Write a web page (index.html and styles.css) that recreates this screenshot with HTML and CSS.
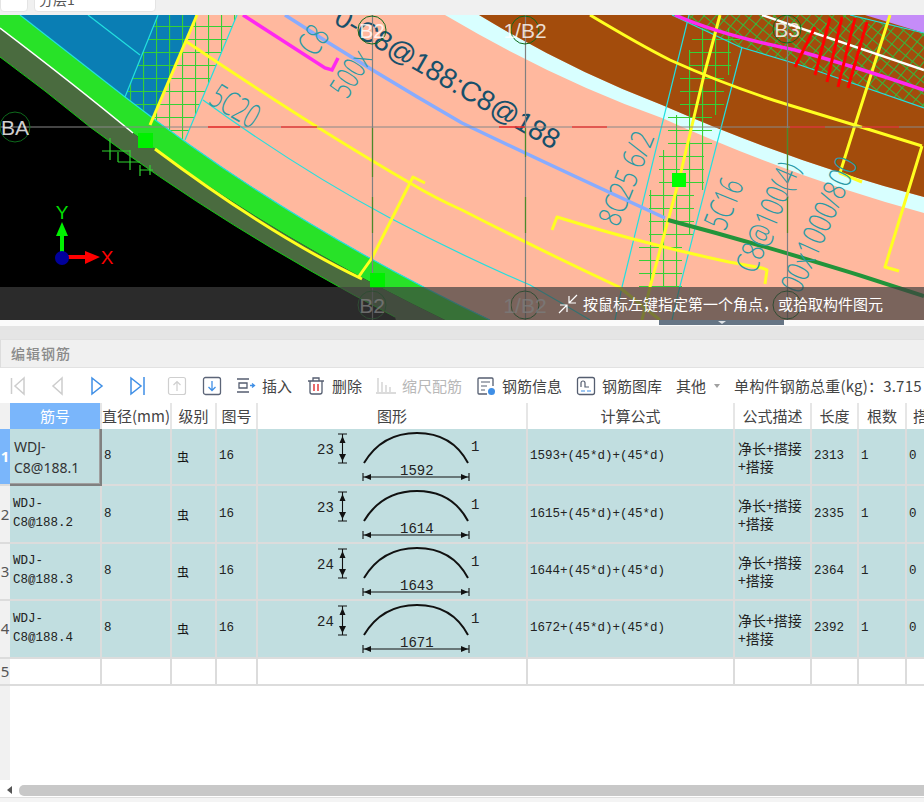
FILE: index.html
```html
<!DOCTYPE html>
<html lang="zh">
<head>
<meta charset="utf-8">
<title>编辑钢筋</title>
<link rel="stylesheet" href="styles.css">
</head>
<body>
<div class="app">
  <div class="topbar">
    <div class="drop drop-a"></div>
    <div class="drop drop-b">分层1</div>
  </div>

  <div class="canvas">
    <svg class="cad" width="924" height="305" viewBox="0 15 924 305">
      <defs>
        <pattern id="grid" width="13" height="13" patternUnits="userSpaceOnUse">
          <path d="M0 .5H13M.5 0V13" stroke="#35d035" stroke-width="1.2" fill="none"/>
        </pattern>
        <pattern id="cross" width="9" height="9" patternUnits="userSpaceOnUse" patternTransform="rotate(40)">
          <path d="M0 .5H9M.5 0V9" stroke="#35b83c" stroke-width="1" fill="none"/>
        </pattern>
      </defs>
      <rect x="0" y="15" width="924" height="305" fill="#000"/>
      <path fill="#4a6b3f" d="M0 28Q75 85 133 133Q270 235 445 320L480 335H400L395 317Q225 228 90 127Q45 90 0 57Z"/>
      <path fill="none" stroke="#12c812" d="M0 57Q45 90 90 127Q225 228 395 317"/>
      <path fill="#ffb89e" d="M197 15H924V320H490Q290 225 125 97L150 125Z"/>
      <polygon fill="#0a7eb4" points="20,15 197,15 150,125 125,97"/>
      <polygon fill="#ffb89e" points="237,15 240,15 185,140 175,136"/>
      <polygon fill="url(#grid)" points="158,15 237,15 185,140 150,125 125,97"/>
      <path fill="#28e228" d="M0 15H20L125 97Q290 225 490 320H445Q270 235 133 133Q75 85 0 28Z"/>
      <path fill="#d8ffff" d="M479 15Q570 70 662 105Q800 165 924 197V213Q800 180 662 118Q555 80 445 15Z"/>
      <path fill="#a34c0c" d="M479 15H924V197Q800 165 662 105Q570 70 479 15Z"/>
      <polygon fill="#c58cf8" points="865,15 924,15 924,33"/>
      <polygon fill="url(#cross)" points="672,15 740,47 800,65 924,108 924,33 850,15"/>
      <path fill="url(#grid)" d="M692 28H740V50H731V75H724V115H712V150H704V190H694V235H682V287H639V235H649V190H659V150H668V115H680V75H689V50H692Z"/>
      <g fill="none" stroke="#22e0e0" stroke-width="1.2">
        <polyline points="237,15 185,140"/>
        <polyline points="158,15 125,97"/>
        <polyline points="88,15 140,55"/>
        <path d="M203 100Q300 170 390 218Q460 255 530 285Q560 302 590 320"/>
        <path d="M125 97Q290 225 490 320"/>
        <polyline points="20,15 125,97"/>
        <polyline points="689,15 622,287 615,320"/>
        <polyline points="742,47 679,290 672,320"/>
        <polyline points="672,15 740,47 800,65 924,108"/>
        <polyline points="850,15 924,33"/>
      </g>
      <g fill="none" stroke="#ffff20" stroke-width="3" stroke-linejoin="round">
        <polyline points="197,15 150,125"/>
        <path d="M187 42Q310 125 410 183Q435 198 462 210Q540 250 619 287L660 320"/>
        <polyline points="425,183 413,177 372,258 362,272 358,278"/>
        <path d="M552 230 557 217Q640 243 729 262L762 268 767 270 765 284"/>
        <path d="M590 15Q640 45 670 60Q730 87 789 105Q855 125 922 146"/>
        <polyline points="720,15 704,75 679,180 650,287 642,320"/>
        <polyline points="890,15 855,125 840,173 862,182"/>
        <polyline points="922,146 885,267 899,271"/>
        <path d="M155 149Q270 235 362 279"/>
      </g>
      <path fill="none" stroke="#fff" stroke-width="1.5" d="M0 28Q75 85 133 133"/>
      <path fill="none" stroke="#fff" stroke-width="2.5" d="M762 15Q840 42 924 70"/>
      <polyline fill="none" stroke="#ff28f0" stroke-width="3.5" points="243,15 325,68 332,70 338,58"/>
      <path fill="none" stroke="#ff28f0" stroke-width="3.5" d="M675 15Q720 35 795 50Q860 68 924 90"/>
      <path fill="none" stroke="#88acff" stroke-width="3.5" d="M285 15Q370 70 462 123Q560 170 665 218"/>
      <path fill="none" stroke="#22943a" stroke-width="4" d="M668 220Q800 255 924 296"/>
      <g stroke="#ff0000" stroke-width="3">
        <line x1="815" y1="27" x2="795" y2="67"/>
        <line x1="830" y1="18" x2="815" y2="75"/>
        <line x1="842" y1="17" x2="827" y2="82"/>
        <line x1="855" y1="18" x2="838" y2="87"/>
        <line x1="867" y1="22" x2="848" y2="88"/>
      </g>
      <g fill="none" stroke="#2fd42f" stroke-width="1.2">
        <path d="M102 151H130M110 138V160M118 152V162M118 162H140M130 150V170M140 165V176M140 170H153M150 165V175"/>
      </g>
      <g class="cad-note">
        <text transform="translate(207,103) rotate(31) scale(1.05,1.6)">5C20</text>
        <text transform="translate(315,58) rotate(-55) scale(1.1,1.6)">C8</text>
        <text transform="translate(347,100) rotate(-58) scale(1.05,1.5)">500x</text>
        <text transform="translate(618,228) rotate(-68) scale(1.15,1.5)">8C25  6/2</text>
        <text transform="translate(725,232) rotate(-68) scale(1.05,1.6)">5C16</text>
        <text transform="translate(755,275) rotate(-67) scale(1.13,1.5)">C8@100(4)</text>
        <text transform="translate(800,295) rotate(-66) scale(1.15,1.5)">00x1000/800</text>
      </g>
      <text class="cad-title" transform="translate(553,150) rotate(30)">0-C8@188:C8@188</text>
      <line x1="0" y1="127" x2="924" y2="127" stroke="#888" stroke-width="1"/>
      <g stroke="#808080" stroke-width="1.2">
        <line x1="372.5" y1="15" x2="372.5" y2="320"/>
        <line x1="525.5" y1="15" x2="525.5" y2="320"/>
        <line x1="787.5" y1="15" x2="787.5" y2="320"/>
      </g>
      <g stroke="#ff1010" stroke-width="1.2">
        <line x1="208" y1="127" x2="240" y2="127"/>
        <line x1="281" y1="127" x2="317" y2="127"/>
        <line x1="499" y1="127" x2="525" y2="127"/>
        <line x1="572" y1="127" x2="607" y2="127"/>
        <line x1="790" y1="127" x2="825" y2="127"/>
        <line x1="862" y1="127" x2="899" y2="127"/>
      </g>
      <g stroke="#4a8a2a" stroke-width="1.2">
        <line x1="372.5" y1="128" x2="372.5" y2="177"/>
        <line x1="372.5" y1="197" x2="372.5" y2="233"/>
        <line x1="525.5" y1="128" x2="525.5" y2="157"/>
        <line x1="525.5" y1="197" x2="525.5" y2="233"/>
        <line x1="787.5" y1="128" x2="787.5" y2="170"/>
        <line x1="787.5" y1="197" x2="787.5" y2="233"/>
      </g>
      <rect x="138" y="133" width="15" height="15" fill="#00f000"/>
      <rect x="370" y="273" width="15" height="15" fill="#00f000"/>
      <rect x="672" y="173" width="14" height="14" fill="#00ff00"/>
      <g fill="none" stroke="#0e6a1c" stroke-width="1">
        <circle cx="15" cy="127" r="15"/>
        <circle cx="372" cy="30" r="14"/>
        <circle cx="525" cy="30" r="14"/>
        <circle cx="787" cy="29" r="14"/>
        <circle cx="372" cy="305" r="14"/>
        <circle cx="525" cy="305" r="14"/>
        <circle cx="787" cy="305" r="14"/>
      </g>
      <g class="cad-axis">
        <text x="15" y="135">BA</text>
        <text x="372" y="38">B2</text>
        <text x="525" y="38">1/B2</text>
        <text x="787" y="37">B3</text>
        <text x="372" y="313">B2</text>
        <text x="525" y="313">1/B2</text>
      </g>
      <g>
        <line x1="62" y1="232" x2="62" y2="258" stroke="#00f000" stroke-width="4"/>
        <polygon points="62,222 56,236 68,236" fill="#00f000"/>
        <line x1="62" y1="257" x2="88" y2="257" stroke="#ff0000" stroke-width="4"/>
        <polygon points="100,257 85,251 85,264" fill="#ff0000"/>
        <circle cx="62" cy="258" r="7" fill="#00009b"/>
        <text class="cad-y" x="62" y="219">Y</text>
        <text class="cad-x" x="107" y="264">X</text>
      </g>
    </svg>
    <div class="status">
      <svg width="22" height="22" viewBox="0 0 22 22" class="status-icon">
        <path d="M20 2 12 10M12 3V10H19M2 20 10 12M3 12H10V19" fill="none" stroke="#fff" stroke-width="1.2"/>
      </svg>
      <span>按鼠标左键指定第一个角点，或拾取构件图元</span>
    </div>
  </div>

  <div class="splitter"><div class="splitter-tab"><i class="splitter-arrow"></i></div></div>
  <div class="band"></div>

  <div class="panel-title">编辑钢筋</div>

  <div class="toolbar">
    <div class="tb-nav">
      <svg class="ic" viewBox="0 0 20 20"><path d="M4.5 2V18M17 2 8 10 17 18Z" fill="none" stroke="#cdcdcd" stroke-width="1.5"/></svg>
      <svg class="ic" viewBox="0 0 20 20"><path d="M15 2 6 10 15 18Z" fill="none" stroke="#cdcdcd" stroke-width="1.5"/></svg>
      <svg class="ic" viewBox="0 0 20 20"><path d="M5 2 15 10 5 18Z" fill="none" stroke="#3f8fe6" stroke-width="1.5"/></svg>
      <svg class="ic" viewBox="0 0 20 20"><path d="M4 2 14 10 4 18ZM17 1V19" fill="none" stroke="#3f8fe6" stroke-width="1.5"/></svg>
      <svg class="ic" viewBox="0 0 20 20"><rect x="1.5" y="1.5" width="17" height="17" rx="2" fill="none" stroke="#cfcfcf" stroke-width="1.2"/><path d="M10 15V6M6.5 9 10 5.5 13.500 9" fill="none" stroke="#cfcfcf" stroke-width="1.2"/></svg>
      <svg class="ic ic-tight" viewBox="0 0 20 20"><rect x="1.500" y="1.500" width="17" height="17" rx="2" fill="none" stroke="#5c6578" stroke-width="1.300"/><path d="M10 5V14M6.500 11 10 14.500 13.500 11" fill="none" stroke="#3f8fe6" stroke-width="1.300"/></svg>
    </div>
    <div class="tb-tools">
      <div class="tool">
        <svg class="ic" viewBox="0 0 20 20"><path d="M1 3H13M3 7H11V12H3ZM1 16H13" fill="none" stroke="#555e70" stroke-width="1.300"/><path d="M14 9.500H18M16 7.500 18.500 9.500 16 11.500" fill="none" stroke="#3f8fe6" stroke-width="1.300"/></svg>
        <span>插入</span>
      </div>
      <div class="tool">
        <svg class="ic" viewBox="0 0 20 20"><path d="M2 5H18M7 5V2H13V5M4 5V16A2 2 0 0 0 6 18H14A2 2 0 0 0 16 16V5" fill="none" stroke="#555e70" stroke-width="1.300"/><path d="M8 8V15M12 8V15" stroke="#e23b3b" stroke-width="1.500"/></svg>
        <span>删除</span>
      </div>
      <div class="tool tool-off">
        <svg class="ic" viewBox="0 0 20 20"><path d="M2 2V16M6 6V16M10 9V16M14 11V16M0 17H20" fill="none" stroke="#cfcfcf" stroke-width="1.300"/></svg>
        <span>缩尺配筋</span>
      </div>
      <div class="tool">
        <svg class="ic" viewBox="0 0 20 20"><path d="M17 10V3A1 1 0 0 0 16 2H3A1 1 0 0 0 2 3V17A1 1 0 0 0 3 18H11" fill="none" stroke="#555e70" stroke-width="1.300"/><path d="M5 6H14M5 10H11M5 14H9" stroke="#555e70" stroke-width="1.100"/><circle cx="15.500" cy="15.500" r="3.500" fill="#3f8fe6"/></svg>
        <span>钢筋信息</span>
      </div>
      <div class="tool">
        <svg class="ic" viewBox="0 0 20 20"><rect x="1.500" y="1.500" width="17" height="17" rx="2" fill="none" stroke="#555e70" stroke-width="1.300"/><path d="M5 11V7A2 2 0 0 1 9 7V11H13" fill="none" stroke="#555e70" stroke-width="1.200"/><path d="M5 15H9M11 15H15" stroke="#3f8fe6" stroke-width="1.200"/></svg>
        <span>钢筋图库</span>
      </div>
      <div class="tool tool-more">
        <span>其他</span><i class="caret"></i>
      </div>
      <div class="tool-weight">单构件钢筋总重(kg)：3.715</div>
    </div>
  </div>

  <svg class="defs-holder" width="0" height="0">
    <defs>
      <g id="rebar">
        <path d="M107 34Q125 4 160 4Q195 4 211 34" fill="none" stroke="#111" stroke-width="2"/>
        <path d="M81 5H90M85.500 5V34M81 34H90M106 44V52M212 44V52M106 48H212" fill="none" stroke="#111" stroke-width="1.100"/>
        <path d="M85.500 7 82.500 14H88.500ZM85.500 32 82 25H89ZM107 48 114 45V51ZM211 48 204 45V51Z" fill="#111"/>
      </g>
    </defs>
  </svg>

  <div class="grid-wrap">
    <table class="grid">
      <colgroup>
        <col class="c-h"><col class="c-id"><col class="c-d"><col class="c-g"><col class="c-n"><col class="c-s"><col class="c-f"><col class="c-t"><col class="c-l"><col class="c-r"><col class="c-x">
      </colgroup>
      <thead>
        <tr>
          <th class="blank"></th><th class="on">筋号</th><th>直径(mm)</th><th>级别</th><th>图号</th><th>图形</th><th>计算公式</th><th>公式描述</th><th>长度</th><th>根数</th><th class="cut">搭接</th>
        </tr>
      </thead>
      <tbody>
        <tr class="row sel">
          <td class="rh rh-on">1</td>
          <td class="active">WDJ-<br>C8@188.1</td>
          <td>8</td><td class="grade">虫</td><td>16</td>
          <td class="shape">
            <svg width="268" height="55" viewBox="1 0 268 55"><use href="#rebar"/><text x="60" y="25">23</text><text x="214" y="22">1</text><text x="143" y="46">1592</text></svg>
          </td>
          <td>1593+(45*d)+(45*d)</td>
          <td class="desc">净长+搭接<br>+搭接</td>
          <td>2313</td><td>1</td><td>0</td>
        </tr>
        <tr class="row sel">
          <td class="rh">2</td>
          <td class="id">WDJ-<br>C8@188.2</td>
          <td>8</td><td class="grade">虫</td><td>16</td>
          <td class="shape">
            <svg width="268" height="55" viewBox="1 0 268 55"><use href="#rebar"/><text x="60" y="25">23</text><text x="214" y="22">1</text><text x="143" y="46">1614</text></svg>
          </td>
          <td>1615+(45*d)+(45*d)</td>
          <td class="desc">净长+搭接<br>+搭接</td>
          <td>2335</td><td>1</td><td>0</td>
        </tr>
        <tr class="row sel">
          <td class="rh">3</td>
          <td class="id">WDJ-<br>C8@188.3</td>
          <td>8</td><td class="grade">虫</td><td>16</td>
          <td class="shape">
            <svg width="268" height="55" viewBox="1 0 268 55"><use href="#rebar"/><text x="60" y="25">24</text><text x="214" y="22">1</text><text x="143" y="46">1643</text></svg>
          </td>
          <td>1644+(45*d)+(45*d)</td>
          <td class="desc">净长+搭接<br>+搭接</td>
          <td>2364</td><td>1</td><td>0</td>
        </tr>
        <tr class="row sel">
          <td class="rh">4</td>
          <td class="id">WDJ-<br>C8@188.4</td>
          <td>8</td><td class="grade">虫</td><td>16</td>
          <td class="shape">
            <svg width="268" height="55" viewBox="1 0 268 55"><use href="#rebar"/><text x="60" y="25">24</text><text x="214" y="22">1</text><text x="143" y="46">1671</text></svg>
          </td>
          <td>1672+(45*d)+(45*d)</td>
          <td class="desc">净长+搭接<br>+搭接</td>
          <td>2392</td><td>1</td><td>0</td>
        </tr>
        <tr class="row empty">
          <td class="rh">5</td><td></td><td></td><td></td><td></td><td></td><td></td><td></td><td></td><td></td><td></td>
        </tr>
      </tbody>
    </table>
  </div>

  <div class="hscroll">
    <i class="hscroll-arrow"></i>
    <div class="hscroll-thumb"></div>
  </div>
  <div class="footer"></div>
</div>
</body>
</html>
```

FILE: styles.css
```css
* { box-sizing: border-box; }
html, body { margin: 0; padding: 0; }
body {
  width: 924px;
  height: 802px;
  overflow: hidden;
  background: #f0f0f0;
  font-family: "Noto Sans CJK SC", "Noto Sans", sans-serif;
  color: #444;
}
.app { display: flex; flex-direction: column; width: 924px; height: 802px; overflow: hidden; }

/* top strip */
.topbar { flex: none; height: 15px; background: #f0f0f0; display: flex; gap: 6px; align-items: flex-end; overflow: hidden; padding-bottom: 3px; }
.drop { height: 28px; background: #fff; border-radius: 4px; border: 1px solid #e4e4e4; flex: none; font-size: 14px; line-height: 20px; color: #555; padding: 0 0 0 4px; display: flex; align-items: flex-end; }
.drop-a { width: 28px; }
.drop-b { width: 122px; padding-bottom: 2px; }

/* drawing */
.canvas { flex: none; position: relative; height: 305px; background: #000; overflow: hidden; }
.cad { display: block; }
.cad-title { font: 28px "Liberation Sans", sans-serif; fill: #17506b; text-anchor: end; }
.cad-note text { font: 300 21px "Open Sans", "Liberation Sans", sans-serif; fill: #2a9aa5; }
.cad-axis text { font: 21px "Liberation Sans", sans-serif; fill: #fff; fill-opacity: .82; text-anchor: middle; }
.cad-y { font: 19px "Liberation Sans", sans-serif; fill: #00e000; text-anchor: middle; }
.cad-x { font: 19px "Liberation Sans", sans-serif; fill: #ff0000; text-anchor: middle; }
.status {
  position: absolute;
  left: 0; right: 0; bottom: 0;
  height: 33px;
  background: rgba(62, 62, 62, .69);
  display: flex;
  align-items: center;
  padding-left: 557px;
  gap: 4px;
  color: #fff;
  font-size: 15px;
  white-space: nowrap;
}
.status-icon { flex: none; }

/* splitter */
.splitter { flex: none; height: 6px; background: #fbfbfb; }
.splitter-tab { width: 125px; height: 5px; margin-left: 659px; background: #667585; display: flex; justify-content: center; }
.splitter-arrow { width: 0; height: 0; border-left: 4px solid transparent; border-right: 4px solid transparent; border-top: 3px solid #dfe3e8; margin-top: 1px; }
.band { flex: none; height: 14px; background: #e5e5e5; border-bottom: 1px solid #e0e0e0; }

.panel-title { flex: none; height: 28px; background: #f0f0f0; padding-left: 10px; font-size: 14px; font-weight: 500; line-height: 27px; letter-spacing: 1px; color: #8a8a8a; border-left: 1px solid #ddd; border-bottom: 1px solid #e2e2e2; }

/* toolbar */
.toolbar { flex: none; height: 35px; background: #fff; display: flex; align-items: center; gap: 14px; padding-left: 7px; white-space: nowrap; overflow: hidden; }
.tb-nav { display: flex; gap: 20px; align-items: center; flex: none; }
.tb-tools { display: flex; gap: 14px; align-items: center; flex: none; }
.ic { width: 20px; height: 20px; flex: none; display: block; }
.ic-tight { margin-left: -5px; }
.tool { display: flex; align-items: center; gap: 6px; font-size: 15px; color: #444; line-height: 20px; }
.tool-off { color: #b8b8b8; }
.tool-more { gap: 8px; }
.caret { width: 0; height: 0; border-left: 3px solid transparent; border-right: 3px solid transparent; border-top: 4px solid #a0a0a0; }
.tool-weight { font-size: 15px; color: #444; line-height: 20px; letter-spacing: .2px; }

.defs-holder { position: absolute; width: 0; height: 0; }

/* table */
.grid-wrap { flex: none; height: 377px; overflow: hidden; background: linear-gradient(90deg, #f1f1f1 10px, #fff 10px); }
.grid { border-collapse: separate; border-spacing: 0; table-layout: fixed; width: 967px; }
.c-h { width: 10px; } .c-id { width: 92px; } .c-d { width: 70px; } .c-g { width: 45px; } .c-n { width: 41px; }
.c-s { width: 270px; } .c-f { width: 207px; } .c-t { width: 77px; } .c-l { width: 47px; } .c-r { width: 48px; } .c-x { width: 60px; }
.grid th {
  height: 26px;
  padding: 0;
  font-weight: 400;
  font-size: 15px;
  line-height: 24px;
  color: #444;
  background: #fff;
  border-right: 2px solid #e6e6e6;
  text-align: center;
  white-space: nowrap;
  overflow: hidden;
}
.grid th.on { background: #7ab6fb; color: #fff; }
.grid th.blank { background: #f1f1f1; border-right: 0; }
.grid th.cut { text-align: left; padding-left: 6px; }
.grid td {
  padding: 0 0 0 2px;
  font: 12.5px/19px "Liberation Mono", "Noto Sans CJK SC", monospace;
  color: #222;
  border-right: 2px solid #dcdcdc;
  border-bottom: 2px solid #dcdcdc;
  vertical-align: middle;
  overflow: hidden;
}
.row.sel td { background: #c1dee0; height: 57.4px; }
.row.empty td { background: #fff; height: 27px; }
.grid td.rh { background: #f1f1f1; padding: 0; font: 15px/19px "Noto Sans", sans-serif; color: #555; border-right: 0; text-align: center; }
.grid td.rh-on { background: #7ab6fb; color: #fff; font-weight: 700; }
.grid td.active {
  font: 14px/21px "Noto Sans", sans-serif;
  color: #333;
  padding-left: 4px;
  border-right: 2px solid #808080;
  border-bottom: 2px solid #808080;
  box-shadow: inset -1px -1px 0 #a0a0a0;
}
.grid td.id { padding-left: 3px; }
.grid td.grade { font: 12px/19px "Noto Sans CJK SC", sans-serif; color: #111; padding-left: 5px; }
.grid td.desc { font: 14px/18px "Noto Sans CJK SC", sans-serif; color: #222; padding-left: 3px; white-space: nowrap; }
.grid td.shape { padding: 0; }
.shape svg { display: block; }
.shape text { font: 14px "Liberation Mono", monospace; fill: #222; }

/* scrollbar */
.hscroll { flex: none; height: 18px; background: #fff; display: flex; align-items: center; padding-top: 3px; border-bottom: 1px solid #e0e0e0; }
.hscroll-arrow { width: 0; height: 0; margin-left: 7px; border-top: 4px solid transparent; border-bottom: 4px solid transparent; border-right: 5px solid #555; flex: none; }
.hscroll-thumb { margin-left: 7px; height: 11px; flex: 1; background: #c8c8c8; border-radius: 5px 0 0 5px; }
.footer { flex: 1; background: #f4f4f4; }
```
